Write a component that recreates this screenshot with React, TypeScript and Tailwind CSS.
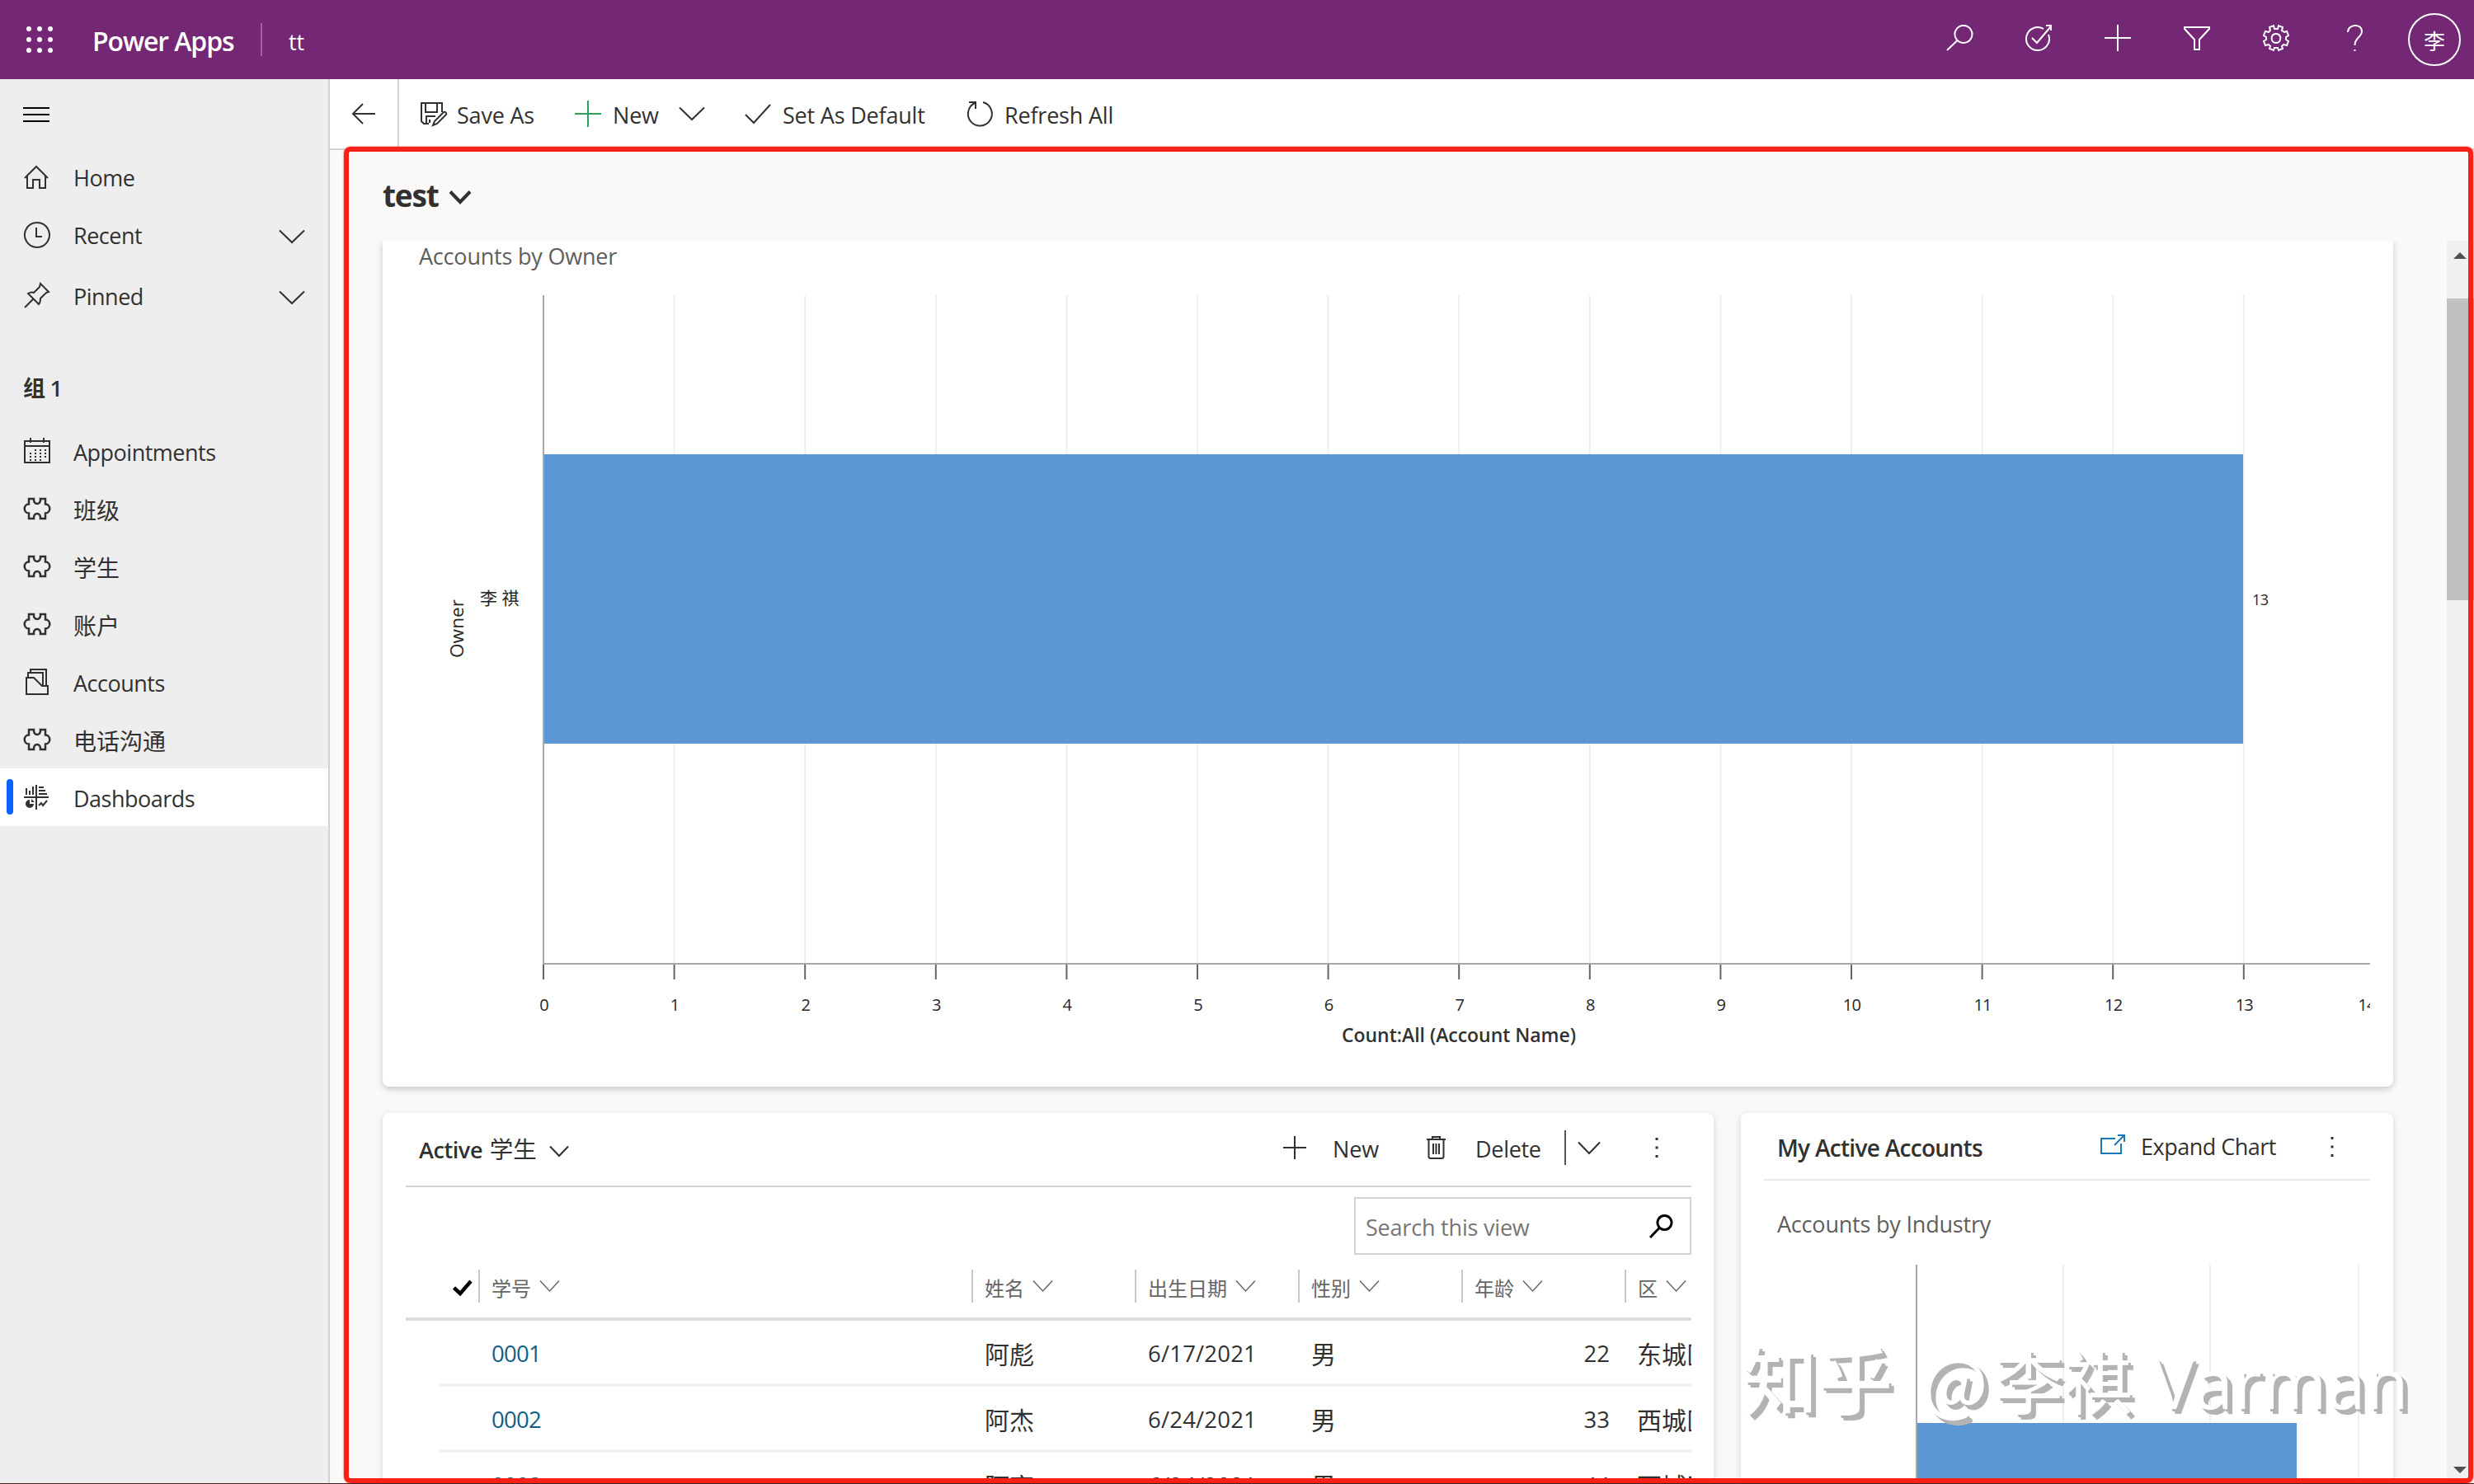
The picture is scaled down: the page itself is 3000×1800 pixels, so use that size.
import React from "react";

const tickList = [0, 1, 2, 3, 4, 5, 6, 7, 8, 9, 10, 11, 12, 13, 14];

const rowList = [
  { no: "0001", name: "阿彪", birth: "6/17/2021", sex: "男", age: "22", area: "东城区" },
  { no: "0002", name: "阿杰", birth: "6/24/2021", sex: "男", age: "33", area: "西城区" },
  { no: "0003", name: "阿亮", birth: "6/24/2021", sex: "男", age: "44", area: "西城区" },
];

const columnList = ["姓名", "出生日期", "性别", "年龄"];

type IconProps = {
  w: number;
  h: number;
  d: string;
  className?: string;
  sw?: number;
};

const Icon = ({ w, h, d, className = "", sw = 2 }: IconProps) => (
  <svg
    width={w}
    height={h}
    viewBox={`0 0 ${w} ${h}`}
    fill="none"
    stroke="currentColor"
    strokeWidth={sw}
    className={`block shrink-0 overflow-visible ${className}`}
  >
    <path d={d} />
  </svg>
);

const Chevron = ({ w = 32, h = 16, sw = 2, className = "" }: { w?: number; h?: number; sw?: number; className?: string }) => (
  <Icon w={w} h={h} sw={sw} className={className} d={`M1 0.5 L${w / 2} ${h - 1} L${w - 1} 0.5`} />
);

const icons = {
  home: "M1 15 L15 1 L29 15 M4 12 V27 H11 V17 H19 V27 H26 V12",
  clock: "M16 1 A15 15 0 1 1 15.9 1 Z M15 7 V18 H22",
  pin: "M1 30 L11 20 M20 1 L30 11 L27 12 L20 19 C20 22 20 24 18 26 L5 13 C8 11 10 11 12 12 L19 5 Z",
  calendar: "M1 4 H31 V30 H1 Z M1 10 H31 M8 0 V6 M24 0 V6",
  puzzle:
    "M6 1 H12 C11 9 21 9 20 1 H26 V7.500 C33 7.500 33 18.500 26 18.500 V25 H20 C21 17 11 17 12 25 H6 V18.500 C-1 18.500 -1 7.500 6 7.500 Z",
  account: "M1 11 H10 L20 21 H27 V31 H1 Z M3 11 V5 H21 V20 M6 5 V1 H25 V21",
  save: "M10 26 H4 L1 23 V1 H26 V12 M6 1 V12 H20 V1 M7 26 V17 H18 M11 21 V25 M15 28 L17 23 L28 12 C30 11 32 13 31 15 L20 26 Z",
  refresh: "M20 2 A14.500 14.500 0 1 1 10 3 M3 2 H11 V10",
  trash: "M0 4 H23 M7 4 V1 H16 V4 M2.500 4 V25 Q2.500 27 5 27 H18 Q20.500 27 20.500 25 V4 M8 9 V22 M11.500 9 V22 M15 9 V22",
  expand: "M18 5 H1 V23 H25 V11 M17 13 L28 2 M21 1 H29 V9",
};

const Header = () => (
  <header className="flex h-24 shrink-0 items-center bg-[#742774] text-white">
    <div className="ml-8 grid grid-cols-3 gap-x-[7px] gap-y-[7px]">
      {[0, 1, 2, 3, 4, 5, 6, 7, 8].map((i) => (
        <span key={i} className="h-1.5 w-1.5 rounded-full bg-white" />
      ))}
    </div>
    <p className="mt-1 ml-[48px] w-[204px] text-[32px] font-semibold tracking-[-1.1px]">Power Apps</p>
    <div className="h-10 w-0.5 bg-[#a85fa8]" />
    <p className="mt-1.5 ml-8 text-[27px]">tt</p>
    <div className="mt-[-4px] mr-[48px] ml-auto flex items-center gap-16">
      <Icon w={32} h={32} d="M21 1 A10.500 10.500 0 1 1 20.900 1 Z M13.500 19 L1 31" />
      <Icon w={32} h={32} d="M22 5 A14 14 0 1 0 28 12 M8 16 L14 22 L31 2 M25 1 H31 V7" />
      <Icon w={32} h={32} d="M16 0 V32 M0 16 H32" />
      <Icon w={32} h={32} d="M1 3 H31 V5 L19 18 V30 H13 V18 L1 5 Z" />
      <Icon
        w={32}
        h={32}
        d="M13 1 L14 5 L18 5 L19 1 L24 3 L23 7 L26 9 L29 8 L31 13 L28 15 V18 L31 20 L29 25 L25 24 L23 26 L24 29 L19 31 L18 28 H14 L13 31 L8 29 L9 26 L7 24 L3 25 L1 20 L4 18 V15 L1 13 L3 8 L7 9 L9 7 L8 3 Z M16 11 A5.500 5.500 0 1 1 15.900 11 Z"
      />
      <Icon w={32} h={32} d="M7 9 C7 -1 24 -2 24 8 C24 15 15 16 15.500 25 M15.500 30 V32" />
    </div>
    <div className="mr-4 flex h-16 w-16 items-center justify-center rounded-full border-2 border-white">
      <span className="mt-1 text-[26px] leading-none">李</span>
    </div>
  </header>
);

const MenuItem = ({ title, icon, active }: { title: string; icon: React.ReactNode; active?: boolean }) => (
  <div className={`relative flex h-[70px] items-center ${active ? "bg-white" : ""}`}>
    {active && <span className="absolute top-[13px] left-2 h-[43px] w-2 rounded-sm bg-[#0b62ff]" />}
    <div className="ml-[29px] flex w-[60px]">{icon}</div>
    <p className="pt-1 text-[27px] tracking-[-0.5px]">{title}</p>
  </div>
);

const CjkMenuItem = ({ title }: { title: string }) => (
  <div className="flex h-[70px] items-center">
    <Icon w={32} h={26} sw={2.5} d={icons.puzzle} className="mr-7 ml-[29px]" />
    <p className="pt-1 text-[28px]">{title}</p>
  </div>
);

const Sidebar = () => (
  <aside className="flex w-[400px] shrink-0 flex-col border-r-2 border-[#d2d2d2] bg-[#eeeeee]">
    <div className="mt-[34px] mb-[31px] ml-7 flex flex-col gap-1.5">
      <span className="h-0.5 w-8 bg-black" />
      <span className="h-0.5 w-8 bg-black" />
      <span className="h-0.5 w-8 bg-black" />
    </div>
    <MenuItem title="Home" icon={<Icon w={30} h={28} d={icons.home} className="mt-0.5" />} />
    <div className="relative">
      <MenuItem title="Recent" icon={<Icon w={32} h={32} d={icons.clock} className="mt-0.5" />} />
      <Chevron className="absolute top-[30px] right-7" />
    </div>
    <div className="relative mt-1">
      <MenuItem title="Pinned" icon={<Icon w={32} h={32} d={icons.pin} className="mt-0.5" />} />
      <Chevron className="absolute top-[30px] right-7" />
    </div>
    <p className="mt-[60px] mb-[23px] ml-7 h-9 text-[27px] leading-9 font-semibold tracking-[-0.7px]">组 1</p>
    <MenuItem
      title="Appointments"
      icon={
        <svg width="32" height="31" viewBox="0 0 32 31" fill="none" stroke="currentColor" strokeWidth="2" className="mb-0.5">
          <path d={icons.calendar} />
          <path d="M13 15 H28 M7 19 H28 M7 23 H28 M7 27 H22" strokeDasharray="2 4" />
        </svg>
      }
    />
    <CjkMenuItem title="班级" />
    <CjkMenuItem title="学生" />
    <CjkMenuItem title="账户" />
    <MenuItem title="Accounts" icon={<Icon w={30} h={32} d={icons.account} className="ml-0.5" />} />
    <CjkMenuItem title="电话沟通" />
    <MenuItem
      title="Dashboards"
      active
      icon={
        <svg width="30" height="30" viewBox="0 0 30 30" fill="none" stroke="currentColor" strokeWidth="2">
          <path d="M15 0 V30 M0 15 H30 M3 4 V12 M7 7 V12 M11 2 V12 M18 3 H24 M18 7 H26 M18 11 H28 M18 25 L21 22 L23 25 L28 19" />
          <path d="M7 18 V23 H12 A5 5 0 1 1 7 18 Z M9 17 L13 21 H9 Z" fill="currentColor" stroke="none" />
        </svg>
      }
    />
  </aside>
);

const CommandBar = () => (
  <div className="flex h-[86px] shrink-0 items-center border-b-2 border-[#d2d2d2] bg-white text-[27px] tracking-[-0.2px]">
    <div className="flex h-full w-[84px] items-center border-r-2 border-[#d2d2d2] pl-[27px]">
      <Icon w={28} h={26} d="M28 13 H1 M13 1 L1 13 L13 25" />
    </div>
    <Icon w={32} h={29} d={icons.save} className="ml-[26px]" />
    <p className="ml-3 w-[143px] pt-1">Save As</p>
    <Icon w={32} h={32} d="M16 0 V32 M0 16 H32" className="text-[#2f9e5b]" />
    <p className="ml-3.5 w-[80px] pt-1">New</p>
    <Chevron />
    <Icon w={32} h={24} d="M1 13 L11 23 L31 1" className="ml-12" />
    <p className="ml-3.5 w-[223px] pt-1">Set As Default</p>
    <Icon w={32} h={32} d={icons.refresh} />
    <p className="ml-3.5 pt-1">Refresh All</p>
  </div>
);

const OwnerChart = () => (
  <svg width="2410" height="926" viewBox="464 352 2410 926" className="block" fill="#262626">
    {tickList.map((t) => (
      <g key={t}>
        {t > 0 && <path d={`M${659 + t * 158.6} 358 V1168`} stroke="#eeeeee" strokeWidth="2" />}
        <path d={`M${659 + t * 158.6} 1168 V1188`} stroke="#666666" strokeWidth="2" />
        <text x={t === 14 ? 2870 : 659.5 + t * 158.6} y="1226" fontSize="20" textAnchor="middle" letterSpacing="-0.8">
          {t}
        </text>
      </g>
    ))}
    <rect x="659" y="551" width="2061" height="351" fill="#5b96d5" />
    <path d="M659 358 V1169 H2874" fill="none" stroke="#a6a8ad" strokeWidth="2" />
    <text x="2731" y="734" fontSize="18" fontWeight="500" letterSpacing="-0.5">13</text>
    <text x="582" y="733" fontSize="21">李 祺</text>
    <text transform="translate(562 798) rotate(-90)" fontSize="22.5" fontWeight="500" textLength="71">
      Owner
    </text>
    <text x="1627" y="1264" fontSize="23" fontWeight="600" textLength="284" fill="#323130">
      Count:All (Account Name)
    </text>
  </svg>
);

const Dots = () => <Icon w={4} h={26} sw={3} d="M2 1 V4 M2 11.500 V14.500 M2 22 V25" />;

const HeadCell = ({ title }: { title: string }) => (
  <div className="flex h-10 items-center border-l-2 border-[#c8c8c8] pl-3.5 text-[24px] text-[#666666]">
    <span className="pt-1.5 whitespace-nowrap">{title}</span>
    <Chevron w={25} h={14} sw={1.5} className="ml-2.5" />
  </div>
);

const StudentCard = () => (
  <section className="h-[600px] w-[1614px] rounded-lg bg-white pr-[27px] pl-7 shadow-[0_3px_8px_rgba(0,0,0,0.16)]">
    <div className="flex h-[90px] items-center border-b-2 border-[#d2d2d2] pl-4 text-[27px] tracking-[-0.1px]">
      <p className="w-[158px] text-[27px] font-semibold whitespace-nowrap tracking-[-0.4px]">
        Active <span className="ml-0.5 text-[28.5px] font-normal tracking-normal">学生</span>
      </p>
      <Chevron w={24} h={13} className="mt-1" />
      <Icon w={28} h={28} d="M14 0 V28 M0 14 H28" className="mb-1 ml-auto" />
      <p className="ml-8 w-[114px]">New</p>
      <Icon w={23} h={28} d={icons.trash} className="mb-1" />
      <p className="ml-9 w-[108px] tracking-[-0.3px]">Delete</p>
      <div className="mb-1 h-[42px] w-0.5 bg-[#555555]" />
      <Chevron w={28} h={15} className="mb-1 ml-3.5" />
      <div className="mr-10 mb-1 ml-[66px]">
        <Dots />
      </div>
    </div>
    <div className="mt-3 ml-auto flex h-[70px] w-[409px] items-center border-2 border-[#d2d2d2] pr-[21px] pl-3">
      <span className="pt-1 text-[27px] tracking-[-0.2px] text-[#767676]">Search this view</span>
      <Icon w={28} h={28} sw={3} d="M18.500 1.500 A8.500 8.500 0 1 1 18.400 1.500 Z M12.500 16 L1 28" className="ml-auto text-black" />
    </div>
    <div className="grid h-20 grid-cols-[88px_598px_198px_198px_198px_198px_81px] items-center overflow-hidden border-b-4 border-[#dcdcdc]">
      <Icon w={24} h={20} sw={4.5} d="M1.500 10 L9 17 L22 2" className="mt-1 ml-[57px] text-black" />
      <HeadCell title="学号" />
      {columnList.map((c) => (
        <HeadCell title={c} key={c} />
      ))}
      <HeadCell title="区" />
    </div>
    {rowList.map((r) => (
      <div
        key={r.no}
        className="ml-10 grid h-20 grid-cols-[64px_598px_198px_198px_162px_202px_97px] items-center overflow-hidden border-b-4 border-[#f1f1f1] text-[27.5px] whitespace-nowrap"
      >
        <span />
        <span className="pt-1 tracking-[-0.7px] text-[#115e86]">{r.no}</span>
        <span className="pt-1 text-[30px]">{r.name}</span>
        <span className="pt-1 tracking-[0.2px]">{r.birth}</span>
        <span className="pt-1 text-[30px]">{r.sex}</span>
        <span className="pt-1 pr-[2px] text-right">{r.age}</span>
        <span className="pt-1 pl-[31px] text-[30px]">{r.area}</span>
      </div>
    ))}
  </section>
);

const AccountCard = () => (
  <section className="h-[600px] w-[791px] rounded-lg bg-white px-7 shadow-[0_3px_8px_rgba(0,0,0,0.16)]">
    <div className="flex h-[82px] items-center border-b-2 border-[#e8e8e8] pt-0.5 pl-4 text-[27px] tracking-[-0.5px]">
      <p className="mt-0.5 text-[28px] font-semibold tracking-[-0.7px]">My Active Accounts</p>
      <Icon w={30} h={24} d={icons.expand} className="mb-1.5 ml-auto text-[#1a78b8]" />
      <p className="ml-[19px] w-[230px]">Expand Chart</p>
      <div className="mr-[44px]">
        <Dots />
      </div>
    </div>
    <p className="mt-[33px] ml-4 h-10 text-[27px] leading-10 tracking-[-0.2px] text-[#605e5c]">Accounts by Industry</p>
    <svg width="735" height="266" viewBox="2139 1534 735 266" className="mt-[29px] block">
      <path d="M2502 1534 V1800 M2680 1534 V1800 M2860 1534 V1800" stroke="#eeeeee" strokeWidth="2" />
      <rect x="2324" y="1726" width="461" height="80" fill="#5b96d5" />
      <path d="M2324 1534 V1800" stroke="#a6a8ad" strokeWidth="2" />
    </svg>
  </section>
);

const ScrollBar = () => (
  <div className="flex w-[33px] shrink-0 flex-col bg-[#f0f0f0] text-[#505050]">
    <svg width="33" height="70" viewBox="0 0 33 70">
      <path d="M8 22 L16 14 L24 22 Z" fill="currentColor" />
    </svg>
    <div className="h-[366px] bg-[#c1c1c1]" />
    <svg width="33" height="20" viewBox="0 0 33 20" className="mt-auto mb-2">
      <path d="M8 7 L24 7 L16 15 Z" fill="currentColor" />
    </svg>
  </div>
);

export default function App() {
  return (
    <div className="relative flex h-[1800px] w-[3000px] flex-col overflow-hidden bg-[#faf9f8] font-['Open_Sans','Noto_Sans_CJK_SC',sans-serif] text-[#323130]">
      <Header />
      <div className="flex min-h-0 flex-1">
        <Sidebar />
        <main className="flex min-w-0 flex-1 flex-col">
          <CommandBar />
          <div className="flex h-[110px] shrink-0 items-center pl-16">
            <h1 className="w-[81px] text-[37px] font-bold tracking-[-1.2px]">test</h1>
            <Chevron w={26} h={14} sw={4} className="mt-1" />
          </div>
          <div className="flex min-h-0 flex-1 overflow-hidden">
            <div className="flex flex-1 flex-col pl-16">
              <section className="h-[1026px] w-[2438px] shrink-0 rounded-b-lg bg-white shadow-[0_3px_8px_rgba(0,0,0,0.2)]">
                <p className="h-[60px] pl-11 text-[27px] leading-[37px] tracking-[-0.2px] text-[#605e5c]">Accounts by Owner</p>
                <OwnerChart />
              </section>
              <div className="mt-8 flex gap-[33px]">
                <StudentCard />
                <AccountCard />
              </div>
            </div>
            <ScrollBar />
          </div>
        </main>
      </div>
      <div className="absolute top-[178px] left-[417px] h-[1621px] w-[2582px] rounded-lg border-[6px] border-[#f92015] shadow-[0_0_2px_#f92015]" />
      <div className="absolute bottom-0 left-0 h-px w-full bg-[#4a2220]" />
      <div className="absolute top-[1609px] left-[2113px] flex items-baseline font-['Noto_Sans_CJK_SC',sans-serif] text-[84px] leading-[120px] whitespace-nowrap text-white [text-shadow:3px_3px_0_#b3b3b3,6px_6px_0_#b3b3b3]">
        <span className="w-[218px] text-[91px] font-medium">知乎</span>
        <span className="w-[87px] text-[84px]">@</span>
        <span className="w-[192px]">李祺</span>
        <span className="font-['Open_Sans',sans-serif] text-[85px]">Varman</span>
      </div>
    </div>
  );
}
